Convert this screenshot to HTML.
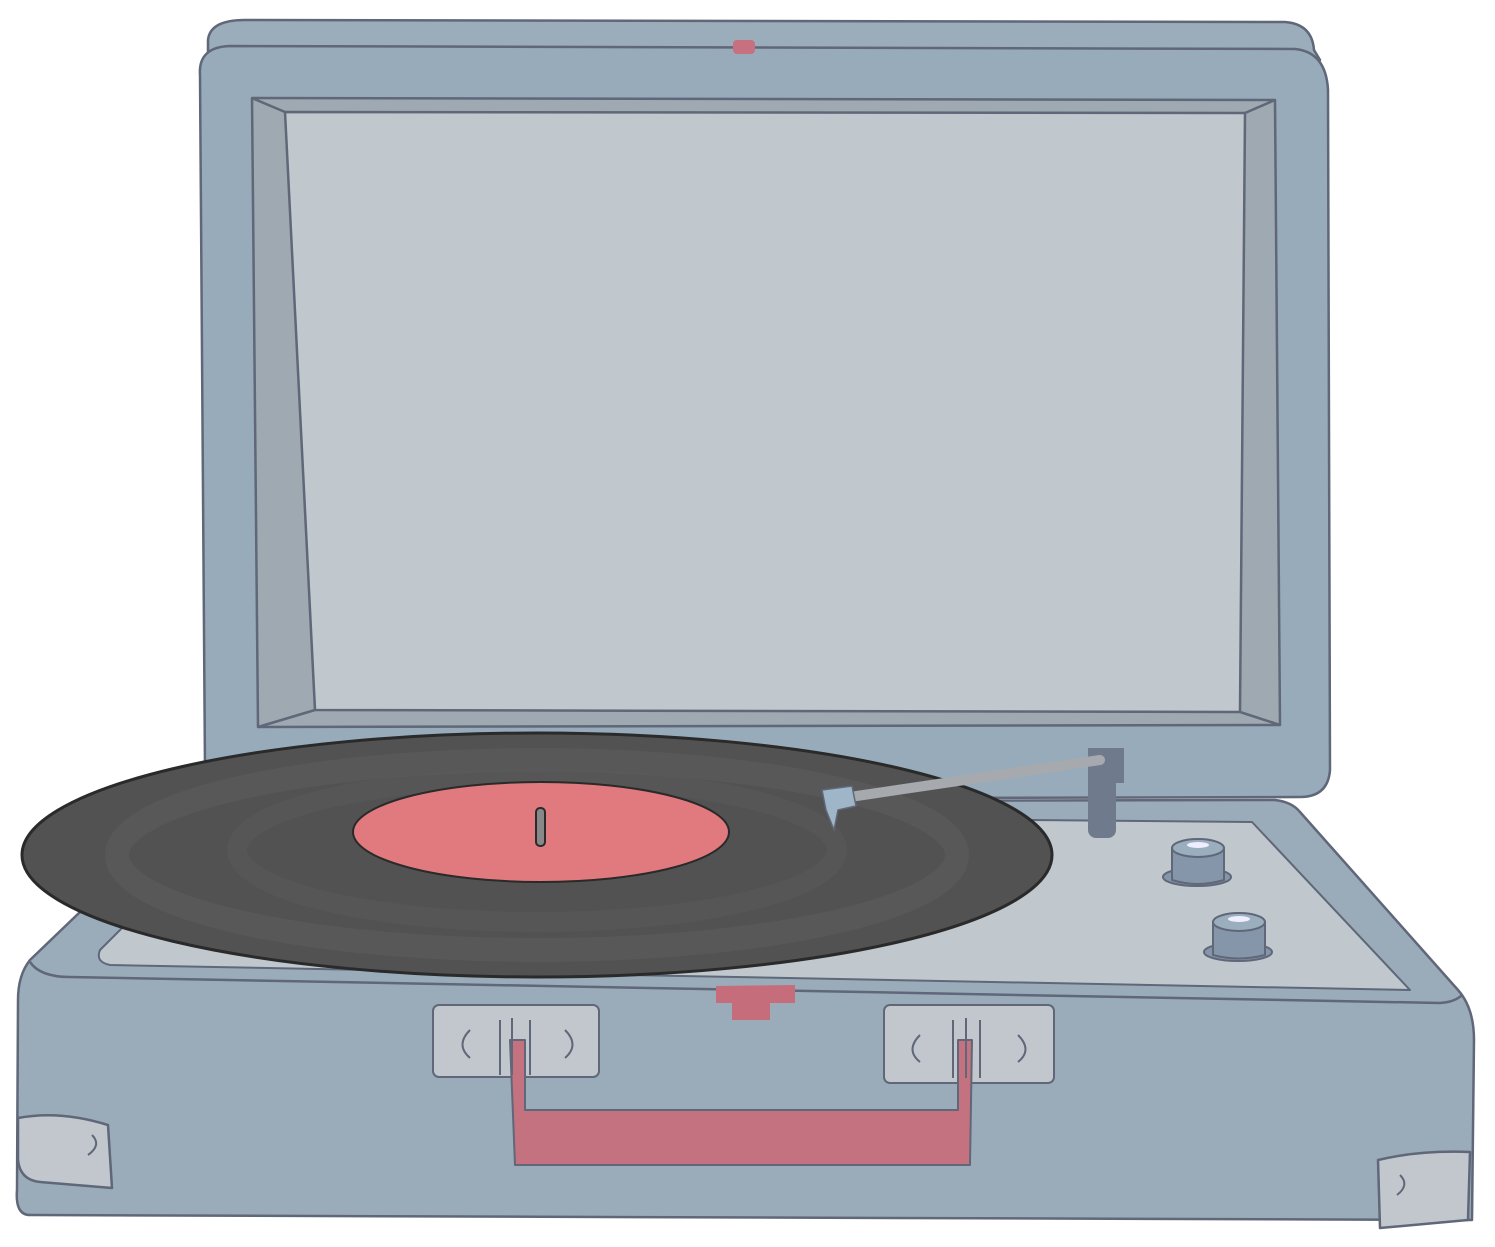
<!DOCTYPE html>
<html><head><style>html,body{margin:0;padding:0;background:#fff;}svg{display:block}</style></head><body>
<svg width="1495" height="1247" viewBox="0 0 1495 1247" xmlns="http://www.w3.org/2000/svg">
<g stroke="#5f6778" stroke-width="2.5" stroke-linejoin="round">
<!-- lid back -->
<path d="M208,40 Q210,20 245,20 L1285,22 Q1312,24 1314,50 L1320,60 L208,60 Z" fill="#9bacba"/>
<!-- lid -->
<path d="M200,75 Q198,47 230,46 L1295,49 Q1326,52 1328,90 L1330,770 Q1328,797 1300,797 L240,800 Q205,800 205,770 Z" fill="#98abba"/>
<!-- bevel -->
<path d="M252,98 L1275,100 L1280,725 L258,727 Z" fill="#9ea9b1"/>
<path d="M285,112 L1245,113 L1240,712 L315,710 Z" fill="#c0c7cd"/>
<line x1="252" y1="98" x2="285" y2="112"/><line x1="1275" y1="100" x2="1245" y2="113"/>
<line x1="258" y1="727" x2="315" y2="710"/><line x1="1280" y1="725" x2="1240" y2="712"/>
<!-- base -->
<path d="M80,912 L140,810 Q150,802 170,802 L1275,800 Q1292,802 1300,812 L1458,990 Q1474,1008 1474,1040 L1472,1220 L30,1215 Q15,1215 17,1190 L18,1000 Q18,975 30,960 Z" fill="#9aacba"/>
<path d="M30,962 Q40,977 70,977 L1440,1003 Q1455,1002 1462,995" fill="none"/>
<path d="M125,925 L160,812 L1252,822 L1410,990 L110,965 Q95,962 100,950 Z" fill="#c0c7cd" stroke-width="2"/>
<!-- corners -->
<path d="M18,1118 Q60,1110 108,1125 L112,1188 L40,1182 Q20,1180 18,1160 Z" fill="#c1c7cd"/>
<path d="M1378,1160 Q1420,1150 1470,1152 L1468,1220 L1380,1228 Z" fill="#c1c7cd"/>
<!-- red tab -->
<path d="M716,986 L795,985 L795,1003 L770,1003 L770,1020 L732,1020 L732,1003 L716,1003 Z" fill="#c66d7b" stroke="none"/>
<rect x="733" y="40" width="22" height="14" rx="4" fill="#c7707f" stroke="none"/>
<!-- latches -->
<rect x="433" y="1005" width="166" height="72" rx="6" fill="#c1c7cd" stroke-width="2"/>
<rect x="884" y="1005" width="170" height="78" rx="6" fill="#c1c7cd" stroke-width="2"/>
<path d="M510,1040 L525,1040 L525,1110 L958,1110 L958,1040 L972,1040 L970,1165 L515,1165 Z" fill="#c47180" stroke-width="2"/>
<g fill="none" stroke-width="2">
<path d="M470,1030 Q455,1045 470,1058"/><path d="M565,1030 Q580,1045 565,1058"/>
<path d="M500,1020 L500,1075 M512,1018 L512,1075 M530,1020 L530,1075"/>
<path d="M920,1035 Q905,1050 920,1062"/><path d="M1018,1035 Q1033,1050 1018,1062"/>
<path d="M953,1020 L953,1078 M966,1018 L966,1078 M980,1020 L980,1078"/>
<path d="M92,1135 Q102,1145 88,1155"/><path d="M1400,1175 Q1410,1185 1397,1195"/>
</g>
<!-- record -->
<ellipse cx="537" cy="855" rx="515" ry="122" fill="#525252" stroke="#2a2a2a" stroke-width="3"/>
<ellipse cx="537" cy="855" rx="420" ry="95" fill="none" stroke="#5e5e5e" stroke-width="24" opacity="0.5"/>
<ellipse cx="537" cy="850" rx="300" ry="72" fill="none" stroke="#5a5a5a" stroke-width="20" opacity="0.5"/>
<ellipse cx="541" cy="832" rx="188" ry="50" fill="#e17a7e" stroke="#2a2a2a" stroke-width="2"/>
<rect x="536" y="808" width="9" height="38" rx="4" fill="#888" stroke="#2a2a2a" stroke-width="2"/>
<!-- tonearm -->
<rect x="1088" y="748" width="36" height="35" fill="#6f7a8c" stroke="none"/>
<rect x="1088" y="770" width="28" height="68" rx="8" fill="#6f7a8c" stroke="none"/>
<path d="M850,797 L1100,760" stroke="#a6aaae" stroke-width="10" stroke-linecap="round"/>
<path d="M822,790 L852,786 L856,806 L838,810 L834,830 L826,810 Z" fill="#9fb5c8" stroke-width="1.5"/>
<!-- knobs -->
<ellipse cx="1197" cy="877" rx="34" ry="9" fill="#8596aa" stroke-width="2"/>
<path d="M1172,848 L1172,880 Q1197,888 1224,880 L1224,848 Z" fill="#8596aa" stroke-width="2"/>
<ellipse cx="1198" cy="848" rx="26" ry="9" fill="#9aaebe" stroke-width="2"/>
<ellipse cx="1198" cy="845" rx="11" ry="3" fill="#eef" stroke="none"/>
<ellipse cx="1238" cy="952" rx="34" ry="9" fill="#8596aa" stroke-width="2"/>
<path d="M1213,922 L1213,955 Q1238,962 1265,955 L1265,922 Z" fill="#8596aa" stroke-width="2"/>
<ellipse cx="1239" cy="922" rx="26" ry="9" fill="#9aaebe" stroke-width="2"/>
<ellipse cx="1239" cy="919" rx="11" ry="3" fill="#eef" stroke="none"/>
</g>
</svg>
</body></html>
